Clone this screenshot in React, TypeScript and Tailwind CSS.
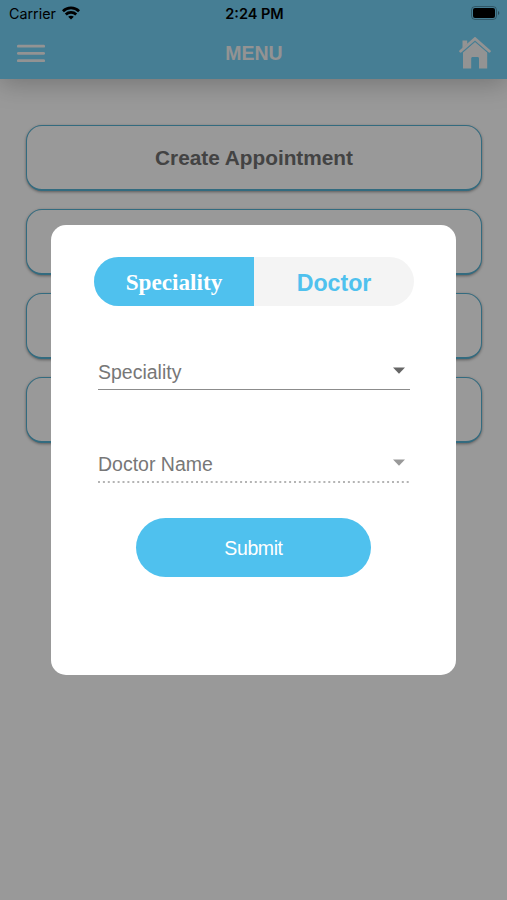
import { useState } from 'react';

const menuItems = ['Create Appointment', '', '', ''];

const StatusBar: React.FC = () => (
  <div className="grid h-[27px] grid-cols-3 items-center pl-[9px] pr-[7px] text-black">
    <div className="flex items-center gap-[6px]">
      <span className="pt-px font-['Inter'] text-[14.3px] leading-none">Carrier</span>
      <svg className="-mt-px h-[14px] w-[18px]" viewBox="0 0 19 14" fill="none" stroke="currentColor" strokeWidth="2.9">
        <path d="M1 5.2C5.7 0.5 13.3 0.5 18 5.2" />
        <path d="M4 8.6C7 5.7 12 5.7 15 8.6" />
        <path d="M9.5 13.8L6.5 10.9C8.3 9.4 10.7 9.4 12.5 10.9Z" fill="currentColor" stroke="none" />
      </svg>
    </div>
    <span className="pt-[2px] text-center font-['Inter'] text-[14.5px] font-semibold leading-none">2:24 PM</span>
    <svg className="-mt-px h-[14px] w-[29px] justify-self-end" viewBox="0 0 29 14" fill="none">
      <rect x="0.5" y="0.5" width="25" height="13" rx="3.5" stroke="#000" strokeOpacity="0.3" />
      <rect x="2" y="2" width="22" height="10" rx="2" fill="#000" />
      <path d="M27 5C28.8 5.6 28.8 8.4 27 9Z" fill="#000" fillOpacity="0.4" />
    </svg>
  </div>
);

const Header: React.FC = () => (
  <header className="h-[79px] bg-[#75d2f7] shadow-[0_4px_26px_rgba(0,0,0,0.25)]">
    <StatusBar />
    <div className="grid h-[52px] grid-cols-3 items-center pl-[17px] pr-[16px] text-[#f5f5f5]">
      <button className="w-[28px]" aria-label="Open menu">
        <svg className="h-[19px] w-[28px]" viewBox="0 0 28 19" stroke="currentColor" strokeWidth="2.7" strokeLinecap="round">
          <path d="M1.3 2.2H26.7M1.3 9.4H26.7M1.3 16.7H26.7" />
        </svg>
      </button>
      <h1 className="pt-[2px] text-center text-[19.5px] font-bold leading-none">MENU</h1>
      <svg className="h-[33px] w-[32px] justify-self-end" viewBox="0 0 32 33" fill="currentColor">
        <path d="M3.5 3.5H8.2V8.2L3.5 12.8Z" />
        <path d="M16 4.8L28.2 15.5V31.6H20V21.5C20 20.5 19.4 20 18.5 20H13.7C12.8 20 12.2 20.5 12.2 21.5V31.6H4V15.5Z" />
        <path d="M1.6 15L16 2.6L30.4 15" fill="none" stroke="#75d2f7" strokeWidth="3.4" />
        <path d="M1.6 14.2L16 1.6L30.4 14.2" fill="none" stroke="currentColor" strokeWidth="2.8" strokeLinecap="round" />
      </svg>
    </div>
  </header>
);

interface SelectFieldProps {
  label: string;
  disabled?: boolean;
}

const SelectField: React.FC<SelectFieldProps> = ({ label, disabled }) => (
  <div className={`flex h-[31px] items-start justify-between pr-[5px] ${disabled ? '' : 'border-b border-[#8c8c8c]'}`}>
    <span className="text-[19.5px] leading-[27px] text-[#777]">{label}</span>
    <svg className={`mt-[8px] h-[7px] w-[12px] ${disabled ? 'text-[#999]' : 'text-[#666]'}`} viewBox="0 0 12 7" fill="currentColor">
      <path d="M0 0.5H12L6 6.8Z" />
    </svg>
  </div>
);

const AppointmentDialog: React.FC = () => {
  const [tab, setTab] = useState('speciality');

  return (
    <div className="h-[450px] w-[405px] rounded-[15px] bg-white pl-[42px] pr-[42px] pt-[32px]">
      <div className="ml-px flex h-[49px] overflow-hidden rounded-full bg-[#f4f4f4]">
        <button
          onClick={() => setTab('speciality')}
          className={`w-[160px] pt-px font-['Liberation_Serif'] text-[23.2px] font-bold ${
            tab === 'speciality' ? 'bg-[#4fc1ee] text-white' : 'text-[#4fc1ee]'
          }`}
        >
          Speciality
        </button>
        <button
          onClick={() => setTab('doctor')}
          className={`flex-1 pt-[3px] text-[23.2px] font-bold ${
            tab === 'doctor' ? 'bg-[#4fc1ee] text-white' : 'text-[#4fc1ee]'
          }`}
        >
          Doctor
        </button>
      </div>

      <div className="ml-[5px] mr-[4px] mt-[53px]">
        <SelectField label="Speciality" />
      </div>
      <div className="ml-[5px] mr-[4px] mt-[61px]">
        <SelectField label="Doctor Name" disabled />
        <svg className="-mt-px h-[2px] w-[311px]" viewBox="0 0 311 2">
          <path d="M0 1H311" stroke="#b4b4b4" strokeWidth="2" strokeDasharray="2 2.9" />
        </svg>
      </div>

      <button className="mx-auto mt-[35px] block h-[59px] w-[235px] rounded-full bg-[#4fc1ee] pt-[2px] text-[19.5px] tracking-[-0.4px] text-white">
        Submit
      </button>
    </div>
  );
};

const App: React.FC = () => {
  return (
    <div className="relative h-[900px] w-full overflow-hidden bg-white font-['Liberation_Sans',sans-serif]">
      <Header />
      <main className="flex flex-col gap-[18px] pl-[26px] pr-[25px] pt-[46px]">
        {menuItems.map((item, index) => (
          <div
            key={index}
            className="flex h-[66px] items-center justify-center rounded-[16px] border border-b-2 border-[#55b2d4] bg-white text-[20.8px] font-bold text-[#707070] shadow-[0_1px_3px_rgba(0,0,0,0.4)]"
          >
            {item}
          </div>
        ))}
      </main>

      <div className="absolute inset-0 flex items-start justify-center bg-black/40 pt-[225px]">
        <AppointmentDialog />
      </div>
    </div>
  );
};

export default App;
